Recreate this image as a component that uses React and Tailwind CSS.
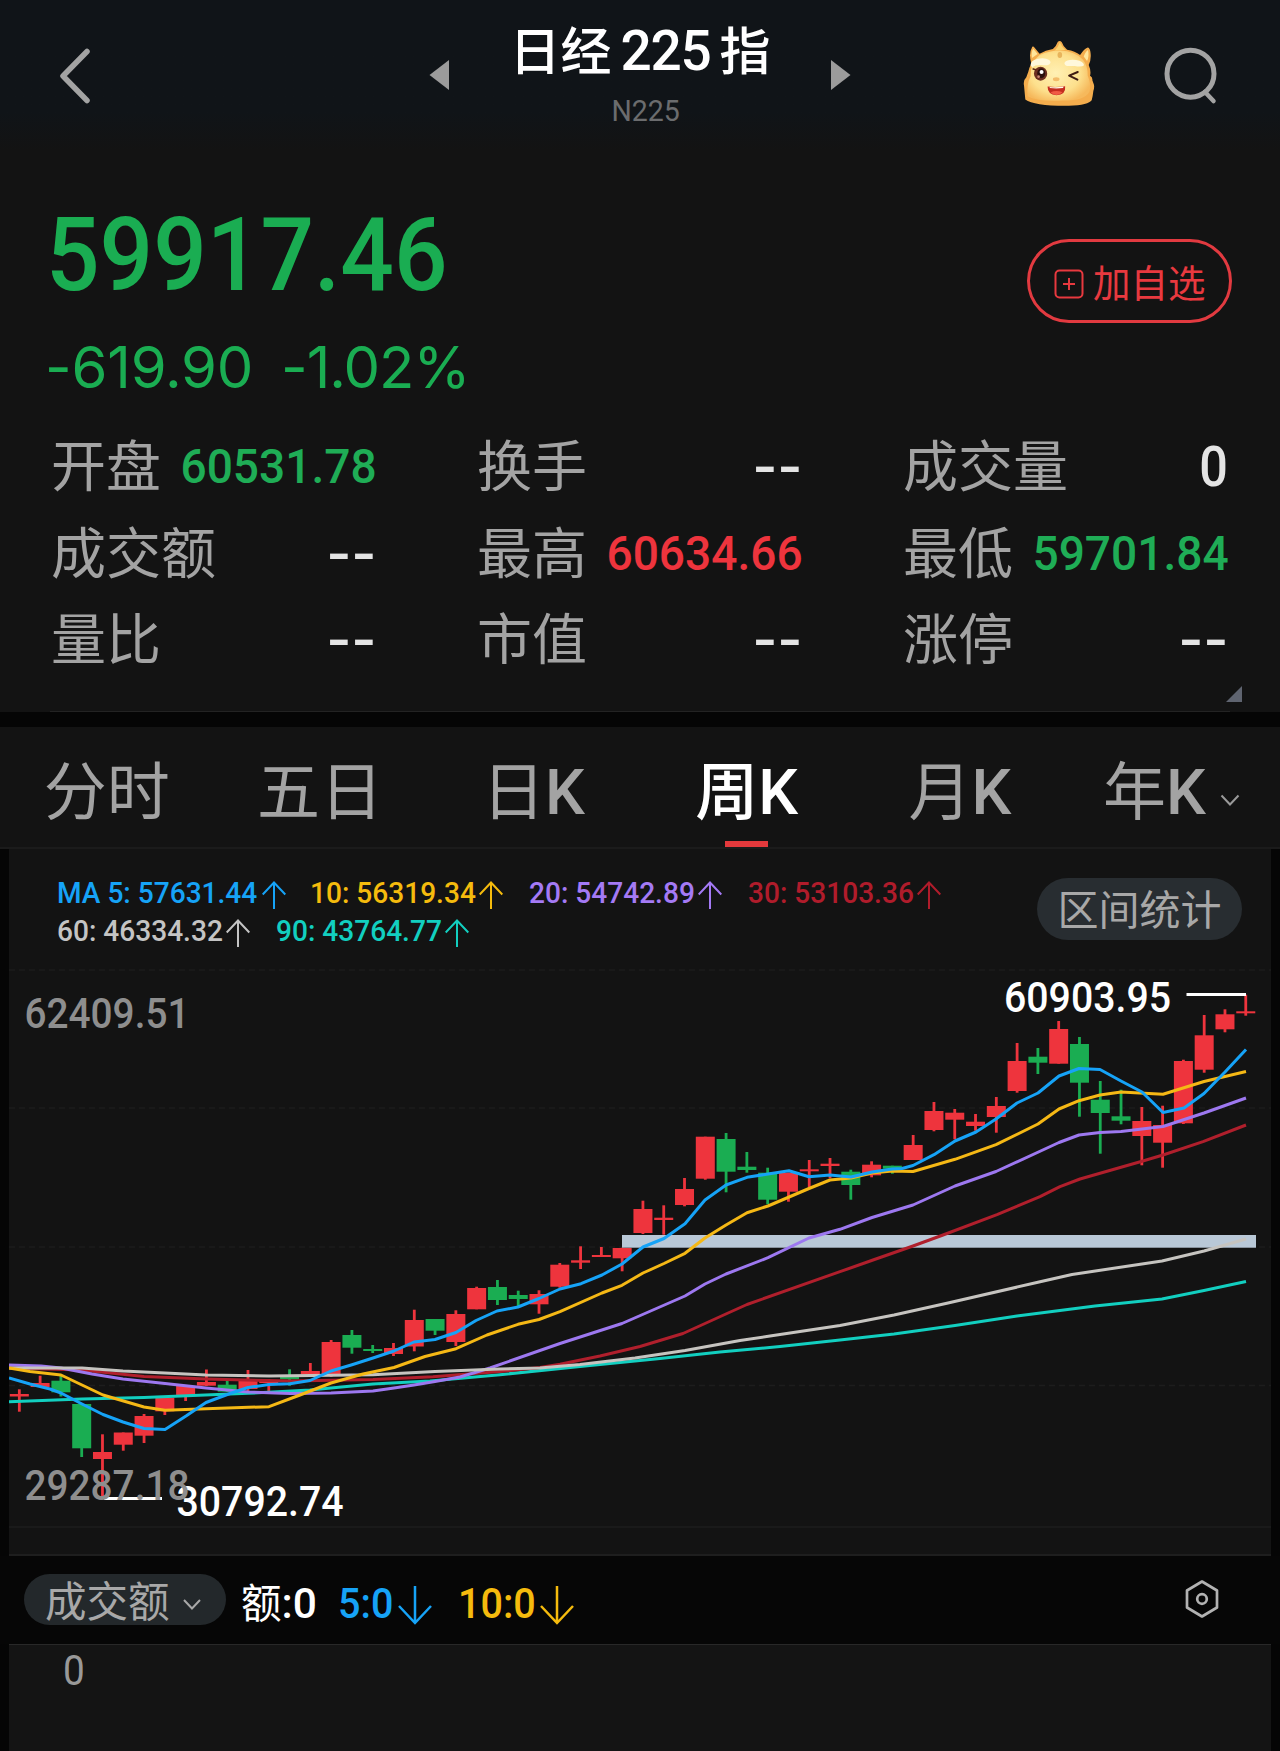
const NAV_GREY = '#a3a3a3';

const STATS = [
  { label: '开盘', value: '60531.78', tone: 'text-[#1fad56]' },
  { label: '换手', value: '--' },
  { label: '成交量', value: '0' },
  { label: '成交额', value: '--' },
  { label: '最高', value: '60634.66', tone: 'text-[#ee343d]' },
  { label: '最低', value: '59701.84', tone: 'text-[#1fad56]' },
  { label: '量比', value: '--' },
  { label: '市值', value: '--' },
  { label: '涨停', value: '--' },
];

const TABS = ['分时', '五日', '日K', '周K', '月K', '年K'];

const MA_ROWS = [
  [
    { text: 'MA 5: 57631.44', color: 'text-[#16a3f7]', width: 'w-[253px]' },
    { text: '10: 56319.34', color: 'text-[#f5bb0d]', width: 'w-[219px]' },
    { text: '20: 54742.89', color: 'text-[#a47af5]', width: 'w-[219px]' },
    { text: '30: 53103.36', color: 'text-[#b01c2b]', width: 'w-[219px]' },
  ],
  [
    { text: '60: 46334.32', color: 'text-[#c4c4c4]', width: 'w-[219px]' },
    { text: '90: 43764.77', color: 'text-[#12cfc0]', width: 'w-[219px]' },
  ],
];

const UP = '#ee343d';
const DOWN = '#1aad52';

// [direction, high, body top, body bottom, low]
const CANDLES = [
  ['u', 1389.3, 1394, 1396.5, 1411.7], ['u', 1375.7, 1383, 1387, 1387], ['d', 1376, 1380.7, 1392.3, 1396.5],
  ['d', 1404, 1404, 1448.3, 1457], ['u', 1434.3, 1452, 1459, 1498], ['u', 1432.5, 1432.5, 1444.7, 1450.7],
  ['u', 1414, 1416, 1435.7, 1443], ['u', 1396, 1397.7, 1411.3, 1415], ['u', 1386, 1386, 1395, 1401],
  ['u', 1369.5, 1382, 1385.7, 1386], ['d', 1380, 1384.7, 1391.7, 1392], ['u', 1370, 1380.7, 1389, 1391],
  ['u', 1379, 1380, 1383, 1391], ['d', 1369.3, 1376.7, 1379.3, 1385.7], ['u', 1363, 1371, 1374.5, 1375],
  ['u', 1340, 1342, 1374.5, 1377], ['d', 1330, 1335, 1347.7, 1353.7], ['d', 1345, 1349, 1351, 1353],
  ['u', 1343, 1348, 1354, 1356], ['u', 1309.7, 1320, 1346.5, 1351.3], ['d', 1319, 1319, 1330.7, 1335],
  ['u', 1310.3, 1314, 1342, 1346], ['u', 1286.7, 1288, 1309.3, 1309.3], ['d', 1280, 1287, 1300, 1305],
  ['d', 1290.7, 1295, 1299, 1308], ['u', 1290.3, 1294, 1304.3, 1313.7], ['u', 1263, 1264.7, 1286.7, 1287.7],
  ['u', 1246.3, 1260.3, 1262.7, 1269], ['u', 1247, 1255, 1257, 1257], ['u', 1247.7, 1248, 1258.3, 1271.3],
  ['u', 1200.7, 1209, 1233, 1234], ['u', 1205.3, 1217.7, 1220, 1234.7], ['u', 1178, 1189, 1205, 1206.3],
  ['u', 1136.7, 1136.7, 1178.7, 1179.7], ['d', 1133, 1139, 1171.7, 1192.3], ['d', 1152, 1166.7, 1170, 1172.7],
  ['d', 1167.7, 1172.7, 1199.7, 1204.3], ['u', 1172.7, 1172.7, 1191.7, 1201.7], ['u', 1160, 1169.3, 1171.3, 1187.3],
  ['u', 1158, 1163.7, 1166, 1178.3], ['d', 1169.7, 1171.7, 1185, 1199.7], ['u', 1161.3, 1164.7, 1175.3, 1177.3],
  ['d', 1165.7, 1165.7, 1168.7, 1173.7], ['u', 1135, 1145, 1160, 1160], ['u', 1102, 1111, 1130, 1131.3],
  ['u', 1109, 1112.7, 1119.7, 1139.3], ['u', 1114, 1121.7, 1126, 1130.7], ['u', 1097, 1106, 1117, 1132.7],
  ['u', 1043, 1061, 1091, 1092.7], ['d', 1048, 1056.7, 1062.7, 1074], ['u', 1021, 1029, 1063.7, 1063.7],
  ['d', 1037, 1044, 1082.7, 1116.7], ['d', 1081, 1099.7, 1113, 1153.7], ['d', 1089.7, 1116.3, 1120.7, 1124.3],
  ['u', 1107, 1121, 1136, 1165.3], ['u', 1105.7, 1125, 1142.7, 1167.7], ['u', 1059.7, 1061, 1123.3, 1124],
  ['u', 1015, 1035.3, 1069.7, 1072.7], ['u', 1009.3, 1014.3, 1029.3, 1032.3], ['u', 994.7, 1011.3, 1013.3, 1015.7],
];

const LINES = [
  { color: '#12cfc0', points: '9,1401.7 82,1399 144,1397.5 248,1393.3 310,1390 373,1384 430,1381 500,1374.7 580,1366.5 660,1358.5 720,1352 780,1346.5 840,1340 894,1334 955,1325.5 1017,1316 1095,1306 1162,1299 1204,1290.5 1246,1281.5' },
  { color: '#b01f2c', points: '9,1368 82,1370 144,1376.5 206,1379 290,1381 373,1379.5 433,1376.7 500,1371.5 540,1367.5 560,1364.3 600,1356 640,1346.5 683,1333.5 727,1313.5 747,1304.5 840,1271.7 873,1260 913,1246 943,1235 997,1214.7 1040,1196.7 1060,1186.7 1080,1179 1142,1161.3 1163,1155 1203,1141.7 1246,1125' },
  { color: '#9d78f0', points: '9,1365 41,1366 61,1368 92,1374 123,1379 165,1383.5 206,1388 248,1392 290,1393.5 331,1393 373,1391 394,1388 414,1385 435,1381.5 460,1377 490,1368 560,1343.5 622,1323.5 685,1296 705,1284 726,1274 768,1257.7 809,1238 840,1229.3 872,1217.5 913,1205 955,1186 996,1171.5 1059,1142.5 1079,1135 1100,1132.5 1121,1131.5 1163,1126.5 1204,1113 1246,1098' },
  { color: '#c6c4c0', points: '9,1368 82,1368 123,1371 165,1373 206,1375 269,1376 373,1374.7 435,1371.5 500,1369 540,1368 580,1364.5 635,1358 685,1350.5 740,1340.5 770,1336 840,1325.5 894,1315 948,1303 1039,1282 1072,1274.5 1162,1261 1204,1251 1225,1245 1246,1239' },
  { color: '#f5b815', points: '9,1368 30,1371.5 61,1375 82,1385 103,1395 144,1407 165,1410.3 206,1408.7 269,1406.7 300,1395 331,1383 363,1374 394,1367.5 425,1356.5 456,1348.7 487,1335 518,1324.3 539,1319.5 560,1311.7 602,1293 622,1285.3 643,1273 664,1263.5 685,1253.3 705,1238 726,1225 747,1212.7 768,1206 809,1188.5 830,1180 851,1178 872,1173 892,1171 913,1171.5 955,1159.3 996,1144.7 1038,1124 1059,1109 1079,1100.7 1100,1095 1121,1092 1163,1094.2 1204,1081.5 1225,1076.5 1246,1071.5' },
  { color: '#16a3f7', points: '9,1378 30,1384 50,1389 61,1393 82,1404 103,1414.5 123,1422 144,1428.5 165,1429.5 186,1416 206,1402.5 230,1393.5 248,1387.5 269,1384.5 290,1383.7 310,1380.5 331,1371 352,1364.7 373,1358 394,1351 414,1342 435,1339.5 456,1332.5 476,1320.5 497,1311 518,1307 539,1298.5 560,1289 581,1283.7 602,1275 622,1264 643,1247 664,1238.5 685,1223.7 705,1200 726,1185 747,1177.3 768,1174 789,1170.7 809,1176.7 830,1175 851,1177 872,1172 892,1169 902,1168.5 913,1165.5 934,1154.7 955,1141 976,1132 996,1119 1017,1103 1038,1093 1059,1076 1079,1068.5 1100,1069.5 1121,1081 1142,1092 1163,1112.5 1184,1108 1204,1093.5 1225,1072 1246,1049.5' },
];

function Mascot() {
  return (
    <svg viewBox="70 31 220 201" className="ml-[172px] mt-[40px] h-[67px] w-[73px]">
      <defs>
        <radialGradient id="face" cx="0.45" cy="0.45" r="0.6">
          <stop offset="0" stopColor="#fff0b4" />
          <stop offset="0.65" stopColor="#fde08d" />
          <stop offset="1" stopColor="#f6b95c" />
        </radialGradient>
      </defs>
      <path d="M77 210 L73 168 Q70 152 80 143 L86 126 Q88 115 95 101 Q86 72 98 51 Q101 48 105 54 L120 72 Q138 62 160 58 Q170 50 175 36 Q181 30 187 37 Q191 50 203 60 Q227 64 242 76 Q254 57 265 53 Q271 54 273 65 Q277 88 268 106 Q276 124 272 138 Q280 141 279 152 L282 160 Q287 170 282 184 Q280 202 277 212 Q268 226 208 229 Q104 230 77 210 Z" fill="#f4ad4d" />
      <path d="M84 200 Q80 165 93 140 Q92 98 120 76 Q148 62 182 62 Q228 64 251 90 Q266 110 265 138 Q277 165 270 187 Q254 214 190 213 Q115 217 84 200 Z" fill="url(#face)" />
      <path d="M97 85 Q94 67 101 57 L114 73 Z M253 80 Q260 63 266 61 Q270 80 263 94 Z" fill="#ffe69b" />
      <path d="M166 62 Q175 54 181 38 Q188 53 198 61 Z" fill="#fbd36f" />
      <ellipse cx="181" cy="76" rx="7" ry="9" fill="#e8b45c" />
      <path d="M93 107 Q93 92 112 88 Q135 82 149 91 Q157 98 149 104 Q140 108 126 106 Q107 105 97 113 Z" fill="#fff8dc" />
      <path d="M195 99 Q203 88 230 91 Q253 95 254 107 Q247 113 226 109 L203 109 Q194 106 195 99 Z" fill="#fff8dc" />
      <ellipse cx="123" cy="132" rx="20" ry="21" fill="#6c2f20" />
      <ellipse cx="125" cy="131" rx="12" ry="15" fill="#2b100e" />
      <circle cx="126" cy="127" r="6" fill="#fff" />
      <circle cx="117" cy="141" r="4" fill="#c98473" />
      <path d="M99 117 L110 121" stroke="#5b2518" strokeWidth="5" />
      <path d="M235 127 L209 138 L234 150" fill="none" stroke="#3f1c13" strokeWidth="6" strokeLinecap="round" strokeLinejoin="round" />
      <ellipse cx="170" cy="149" rx="10" ry="6" fill="#f3bc6b" />
      <path d="M144 171 Q170 174 197 170 Q200 196 171 197 Q144 196 144 171 Z" fill="#c42c20" />
      <path d="M150 172 Q170 174 192 171 L191 175 Q170 178 151 175 Z" fill="#fffbe8" />
      <path d="M153 188 Q171 181 189 188 Q181 196 171 196 Q160 196 153 188 Z" fill="#f15b44" />
    </svg>
  );
}

function Header() {
  return (
    <header className="flex h-[150px] items-start bg-gradient-to-b from-[#101418] from-75% to-[#131313]">
      <svg viewBox="0 0 36 62" className="ml-[56px] mt-[45px] h-[62px] w-[36px]">
        <path d="M31 6.500 L7 31 L31 55.500" fill="none" stroke={NAV_GREY} strokeWidth="5.500" strokeLinecap="round" strokeLinejoin="round" />
      </svg>
      <svg viewBox="0 0 20 30" className="ml-[337px] mt-[60px] h-[30px] w-[20px]">
        <path d="M20 0 V30 L0.500 15 Z" fill="#9b9b9b" />
      </svg>
      <div className="flex w-[382px] flex-col items-center pt-[21px]">
        <h1 className="flex items-baseline text-[51px] leading-[60px] font-medium text-white">
          日经<span className="mr-[9px] ml-[9px] text-[55px] tracking-[-1.2px]">225</span>指
        </h1>
        <p className="mt-[13px] scale-x-95 pl-[12px] text-[30px] leading-[30px] text-[#6b6c6e]">N225</p>
      </div>
      <svg viewBox="0 0 20 30" className="mt-[60px] h-[30px] w-[20px]">
        <path d="M0 0 V30 L19.500 15 Z" fill="#9b9b9b" />
      </svg>
      <Mascot />
      <svg viewBox="0 0 56 60" className="ml-[67px] mt-[46px] h-[60px] w-[56px]">
        <circle cx="27.500" cy="27.700" r="23.500" fill="none" stroke={NAV_GREY} strokeWidth="5" />
        <path d="M42 46 L50.500 55" stroke={NAV_GREY} strokeWidth="4.500" strokeLinecap="round" />
      </svg>
    </header>
  );
}

function StatValue({ value, tone }) {
  if (value === '--') {
    return <span className="origin-right scale-x-[1.3] text-[49px] leading-[88px] font-bold text-[#e4e4e4]">--</span>;
  }
  if (value === '0') {
    return <span className="mr-[1px] origin-right scale-x-90 text-[56px] font-medium text-[#e4e4e4]">0</span>;
  }
  return <span className={`origin-right scale-x-[0.94] text-[49px] font-medium ${tone}`}>{value}</span>;
}

function Quote() {
  return (
    <section className="h-[562px]">
      <div className="flex justify-between pr-[48px] pl-[46px]">
        <div className="pt-[54px] text-[#1aad52]">
          <p className="origin-left scale-x-[0.925] text-[102px] leading-none font-medium">59917.46</p>
          <p className="mt-[32px] -ml-[1px] flex font-['Inter'] text-[58px] leading-none">
            <span className="w-[236px] tracking-[-0.2px]">-619.90</span>
            <span className="tracking-[-1px]">-1.02%</span>
          </p>
        </div>
        <button className="mt-[89px] flex h-[84px] w-[205px] items-center rounded-full border-[3px] border-[#e23a40] pl-[24px] text-[#e8393f]">
          <svg viewBox="0 0 30 30" className="mt-[5px] h-[30px] w-[30px]">
            <rect x="1.500" y="1.500" width="27" height="27" rx="4" fill="none" stroke="currentColor" strokeWidth="2" />
            <path d="M9 15 H21 M15 9 V21" stroke="currentColor" strokeWidth="2" />
          </svg>
          <span className="mt-[7px] ml-[9px] text-[37.5px] leading-none">加自选</span>
        </button>
      </div>
      <div className="mt-[28px] grid grid-cols-3 gap-x-[100px] px-[51px]">
        {STATS.map(s => (
          <div key={s.label} className="flex h-[86.5px] items-start justify-between leading-[86.5px] whitespace-nowrap">
            <span className="text-[55px] text-[#a3a3a3]">{s.label}</span>
            <StatValue {...s} />
          </div>
        ))}
      </div>
      <div className="mx-[50px] flex h-[28px] justify-end border-b border-[#232323]">
        <svg viewBox="0 0 16 16" className="mt-[2px] -mr-[12px] h-[16px] w-[16px]">
          <path d="M16 0 V16 H0 Z" fill="#5f6470" />
        </svg>
      </div>
    </section>
  );
}

function Tabs() {
  return (
    <nav className="grid h-[122px] grid-cols-6 border-b-2 border-[#1b1b1b] bg-[#131313]">
      {TABS.map(t => {
        const active = t === '周K';
        return (
          <div key={t} className="flex flex-col items-center pt-[17px]">
            <span className={`flex items-center text-[63px] leading-[97px] whitespace-nowrap ${active ? 'font-medium text-white' : 'text-[#a3a3a3]'}`}>
              {t[0]}
              <span className="font-medium">{t.endsWith('K') ? 'K' : ''}</span>
              {t.endsWith('K') ? null : t[1]}
              {t === '年K' && (
                <svg viewBox="0 0 20 12" className="mt-[14px] mr-[4px] ml-[14px] h-[12px] w-[20px]">
                  <path d="M1.500 1.500 L10 10.500 L18.500 1.500" fill="none" stroke="#9a9a9a" strokeWidth="2" />
                </svg>
              )}
            </span>
            {active && <span className="h-[6px] w-[43px] shrink-0 bg-[#e4393c]" />}
          </div>
        );
      })}
    </nav>
  );
}

function MovingAverages() {
  return (
    <div className="flex h-[120px] justify-between pt-[26px] pr-[29px] pl-[48px]">
      <div className="text-[29.5px] leading-[37.6px] font-medium">
        {MA_ROWS.map((row, i) => (
          <div key={i} className="flex h-[37.600px]">
            {row.map(m => (
              <div key={m.text} className={`flex shrink-0 whitespace-nowrap ${m.width} ${m.color}`}>
                <span className="origin-left scale-x-[0.952]">{m.text}</span>
                <svg viewBox="0 0 24 28" className="mt-[6px] -ml-[5px] h-[28px] w-[24px]">
                  <path d="M12 28 V1.500 M0.700 13.500 L12 1.500 L23.300 13.500" fill="none" stroke="currentColor" strokeWidth="2" />
                </svg>
              </div>
            ))}
          </div>
        ))}
      </div>
      <button className="mt-[3px] h-[62px] w-[205px] shrink-0 rounded-full bg-[#282d31] text-[41px] leading-[67px] text-[#a8a8a8]">
        区间统计
      </button>
    </div>
  );
}

function KLineChart() {
  return (
    <svg viewBox="9 969 1262 585" className="h-[585px] w-[1262px]">
      <g stroke="#1d1d1d" strokeWidth="1.500" strokeDasharray="6 4">
        <path d="M9 970 H1271 M9 1108 H1271 M9 1247 H1271 M9 1385.500 H1271" />
      </g>
      <path d="M9 1527 H1271" stroke="#1e1e1e" strokeWidth="1.500" />
      {CANDLES.map(([dir, high, top, bottom, low], i) => {
        const x = 19.33 + i * 20.787;
        return (
          <g key={i} fill={dir === 'u' ? UP : DOWN}>
            <rect x={x - 1.4} y={high} width="2.800" height={low - high} />
            <rect x={x - 9.5} y={top} width="19" height={bottom - top} />
          </g>
        );
      })}
      <rect x="622" y="1235" width="634" height="12.700" fill="#b9c8d7" />
      {LINES.map(l => (
        <polyline key={l.color} points={l.points} fill="none" stroke={l.color} strokeWidth="3" strokeLinejoin="round" />
      ))}
      <path d="M1186.500 994.500 H1246 M104 1498.500 H162" stroke="#fff" strokeWidth="3" />
      <g fontSize="42" fontWeight="500">
        <text x="1004" y="1012" fill="#fff" textLength="167" lengthAdjust="spacingAndGlyphs">60903.95</text>
        <text x="176.500" y="1516" fill="#fff" textLength="167" lengthAdjust="spacingAndGlyphs">30792.74</text>
        <text x="24.500" y="1028" fill="#8e8e8e" textLength="165" lengthAdjust="spacingAndGlyphs">62409.51</text>
        <text x="24.500" y="1500" fill="#8e8e8e" textLength="165" lengthAdjust="spacingAndGlyphs">29287.18</text>
      </g>
    </svg>
  );
}

function DownArrow() {
  return (
    <svg viewBox="0 0 34 39" className="mt-[13px] h-[39px] w-[34px]">
      <path d="M17 0 V37 M1 20 L17 37 L33 20" fill="none" stroke="currentColor" strokeWidth="2.500" />
    </svg>
  );
}

function VolumeBar() {
  return (
    <div className="flex h-[88px] bg-[#060606] pl-[24px] text-[42.5px] leading-[62px] font-medium">
      <button className="mt-[18px] flex h-[51px] w-[202px] items-center rounded-full bg-[#23282b] pl-[21px] text-[#a8a8a8]">
        <span className="mt-[7px] text-[41.5px] leading-[56px] font-normal">成交额</span>
        <svg viewBox="0 0 18 11" className="mt-[10px] ml-[13px] h-[11px] w-[18px]">
          <path d="M1 1 L9 9.500 L17 1" fill="none" stroke="currentColor" strokeWidth="2" />
        </svg>
      </button>
      <div className="ml-[15px] flex w-[97px] pt-[17px] text-white">
        <span className="text-[40.5px] font-normal">额</span>
        <span className="origin-left">:0</span>
      </div>
      <div className="flex w-[120px] pt-[17px] text-[#16a3f7]">
        <span className="w-[60px] origin-left scale-x-[0.93]">5:0</span>
        <DownArrow />
      </div>
      <div className="flex pt-[17px] text-[#f5bb0d]">
        <span className="w-[82px] origin-left scale-x-[0.93]">10:0</span>
        <DownArrow />
      </div>
      <svg viewBox="0 0 36 40" className="mt-[23px] mr-[60px] ml-auto h-[40px] w-[36px]">
        <path d="M18 2.500 L33 11.500 V28.500 L18 37.500 L3 28.500 V11.500 Z" fill="none" stroke="#b2b2b2" strokeWidth="2.700" strokeLinejoin="round" />
        <circle cx="18" cy="20" r="4.800" fill="none" stroke="#b2b2b2" strokeWidth="2.700" />
      </svg>
    </div>
  );
}

export default function App() {
  return (
    <div className="flex h-[1751px] w-[1280px] flex-col overflow-hidden bg-[#131313] font-['Roboto','Noto_Sans_CJK_SC',sans-serif]">
      <Header />
      <Quote />
      <div className="h-[15px] bg-[#050505]" />
      <Tabs />
      <div className="flex h-[902px] flex-col bg-[#050505]">
        <div className="mx-[9px] h-[707px] border-b-2 border-[#1e1e1e] bg-[#131313]">
          <MovingAverages />
          <KLineChart />
        </div>
        <VolumeBar />
        <div className="mx-[9px] flex-1 border-t border-[#282828] bg-[#141414] pl-[54px]">
          <span className="block origin-left scale-x-90 text-[43px] leading-[50px] text-[#999]">0</span>
        </div>
      </div>
    </div>
  );
}
